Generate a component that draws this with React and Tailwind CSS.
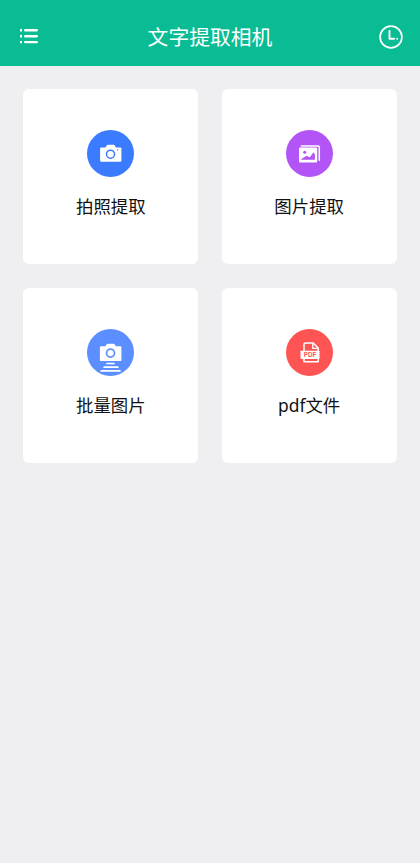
import React from 'react';

const MenuIcon = () => (
  <svg width="20" height="18" viewBox="0 0 20 18" fill="none" stroke="#fff" strokeWidth="2.4">
    <path d="M1 3.3h2M1 9.2h2M1 15.1h2" />
    <path d="M6.2 3.3h11.6M6.2 9.2h11.6M6.2 15.1h11.6" strokeLinecap="round" />
  </svg>
);

const HistoryIcon = () => (
  <svg width="24" height="24" viewBox="0 0 24 24" fill="none" stroke="#fff">
    <circle cx="12" cy="12" r="10.9" strokeWidth="1.7" />
    <path d="M10.5 5.9v7.9h4.6" strokeWidth="1.9" strokeLinecap="round" strokeLinejoin="round" />
    <circle cx="18.1" cy="13.7" r="1" fill="#fff" stroke="none" />
  </svg>
);

const CameraIcon = () => (
  <svg width="47" height="47" viewBox="0 0 47 47">
    <path
      fill="#fff"
      d="M14.3 17.4h4.2l1.2-2a1.2 1.2 0 0 1 1-.6h6.1a1.2 1.2 0 0 1 1 .6l1.2 2h4.2a1.2 1.2 0 0 1 1.2 1.2v12a1.2 1.2 0 0 1-1.2 1.2H14.3a1.2 1.2 0 0 1-1.2-1.2v-12a1.2 1.2 0 0 1 1.2-1.2z"
    />
    <circle cx="23.5" cy="24.2" r="4" fill="none" stroke="#3a7bff" strokeWidth="1.5" />
    <circle cx="30.6" cy="19.9" r="0.7" fill="#3a7bff" />
  </svg>
);

const PictureIcon = () => (
  <svg width="47" height="47" viewBox="0 0 47 47">
    <path
      d="M15.3 15.9h16.8a1.2 1.2 0 0 1 1.2 1.2v13.2"
      fill="none"
      stroke="#fff"
      strokeWidth="1.5"
      strokeLinecap="round"
    />
    <rect x="13" y="17.5" width="18.2" height="15" rx="1.1" fill="#fff" />
    <circle cx="18.7" cy="22.2" r="1.5" fill="#b254f6" />
    <path d="M15.3 29.8v-.7l5.4-3.4 3 1.7 3.8-5.2 1.4 2.3v5.3z" fill="#b254f6" />
  </svg>
);

const BatchIcon = () => (
  <svg width="47" height="47" viewBox="0 0 47 47">
    <path
      fill="#fff"
      d="M14.1 17.3h4.4l1.2-2a1.2 1.2 0 0 1 1-.6h5.9a1.2 1.2 0 0 1 1 .6l1.2 2h4.4a1.2 1.2 0 0 1 1.2 1.2v12.4a1.2 1.2 0 0 1-1.2 1.2H14.1a1.2 1.2 0 0 1-1.2-1.2V18.5a1.2 1.2 0 0 1 1.2-1.2z"
    />
    <circle cx="23.5" cy="24.1" r="4" fill="none" stroke="#5b8fff" strokeWidth="1.7" />
    <path d="M20 34.5h7M17.2 38.2h13.6M14.2 41.8h18.8" stroke="#fff" strokeWidth="1.7" strokeLinecap="round" />
  </svg>
);

const PdfIcon = () => (
  <svg width="47" height="47" viewBox="0 0 47 47">
    <path
      d="M18 22.5v-7.3a1.2 1.2 0 0 1 1.2-1.2h8l5 5v3.5M18 29.5v3.2h14.2v-3.2"
      fill="none"
      stroke="#fff"
      strokeWidth="1.5"
      strokeLinejoin="round"
    />
    <path d="M26.8 14v5.3h5.4" fill="none" stroke="#fff" strokeWidth="1.3" />
    <rect x="14.5" y="21.7" width="19" height="8.3" rx="0.6" fill="#fff" />
    <text
      x="24"
      y="28.3"
      textAnchor="middle"
      textLength="12.6"
      lengthAdjust="spacingAndGlyphs"
      fontSize="6.8"
      fontWeight="700"
      fontFamily="Liberation Sans, sans-serif"
      fill="#ff5454"
    >
      PDF
    </text>
  </svg>
);

const features = [
  { label: '拍照提取', color: 'bg-[#3a7bff]', Icon: CameraIcon },
  { label: '图片提取', color: 'bg-[#b254f6]', Icon: PictureIcon },
  { label: '批量图片', color: 'bg-[#5b8fff]', Icon: BatchIcon },
  { label: 'pdf文件', color: 'bg-[#ff5454]', Icon: PdfIcon },
];

const FeatureCard = ({ label, color, Icon }) => (
  <button className="flex h-[175.3px] flex-col items-center rounded-md bg-white pt-[40.8px]">
    <span className={`size-[47px] rounded-full ${color}`}>
      <Icon />
    </span>
    <span className="mt-4 text-[17.4px] leading-[26px] text-[#111]">{label}</span>
  </button>
);

const App = () => {
  return (
    <div className="min-h-screen bg-[#efeff1] font-['Noto_Sans','Noto_Sans_CJK_SC',sans-serif]">
      <header className="flex h-[65.5px] items-center justify-between bg-[#09bc93] pt-2 pr-[17px] pl-[19px]">
        <button className="flex w-[22px] pb-px" aria-label="菜单">
          <MenuIcon />
        </button>
        <h1 className="pt-px text-[20.8px] leading-7 text-white">文字提取相机</h1>
        <button className="flex w-6" aria-label="历史记录">
          <HistoryIcon />
        </button>
      </header>

      <main className="grid grid-cols-2 gap-x-[23.2px] gap-y-[23.6px] px-[23.3px] pt-[23.4px]">
        {features.map((item) => (
          <FeatureCard key={item.label} {...item} />
        ))}
      </main>
    </div>
  );
};

export default App;
